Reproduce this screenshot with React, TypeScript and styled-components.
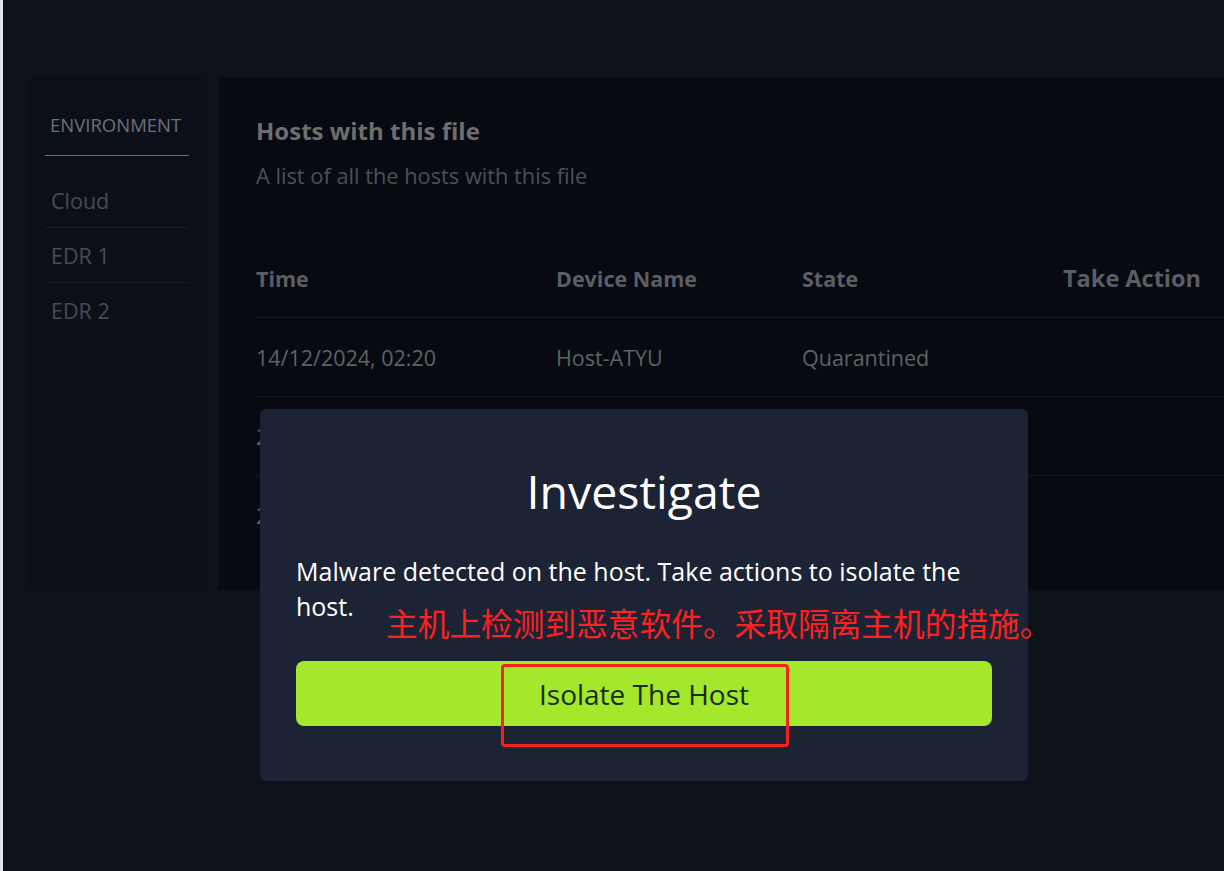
import styled, { createGlobalStyle } from "styled-components";

const GlobalStyle = createGlobalStyle`
  html, body, #root {
    margin: 0;
    height: 100%;
  }
  body {
    background-color: #0d1119;
    font-family: "Open Sans", "Noto Sans", sans-serif;
    overflow: hidden;
  }
  * {
    box-sizing: border-box;
  }
`;

const Page = styled.div`
  position: relative;
  height: 100%;
  border-left: 3px solid #dfe3ea;
  background-color: #0d1119;
  padding: 77px 0 0 24px;
  overflow: hidden;
`;

const Layout = styled.div`
  display: flex;
  gap: 12px;
  align-items: stretch;
  width: 1300px;
`;

const Sidebar = styled.aside`
  width: 180px;
  background-color: #0b0f17;
  padding: 36px 18px 0;
`;

const SideHeading = styled.div`
  font-size: 18.5px;
  line-height: 24px;
  color: #6d717a;
  padding: 0 0 18px 5px;
  border-bottom: 1px solid #6a7a30;
`;

const SideList = styled.ul`
  list-style: none;
  margin: 17px 0 0;
  padding: 0;
`;

const SideItem = styled.li<{ last?: boolean }>`
  height: 55px;
  display: flex;
  align-items: center;
  padding-left: 6px;
  font-size: 21.5px;
  color: #474c55;
  border-bottom: ${(p) => (p.last ? "none" : "1px solid #181c24")};
`;

const Main = styled.main`
  flex: 1;
  background-color: #070a11;
  padding: 39px 0 36px 37px;
`;

const Title = styled.h2`
  margin: 0;
  font-size: 24px;
  line-height: 30px;
  font-weight: 700;
  color: #6e6e6e;
`;

const Subtitle = styled.p`
  margin: 17px 0 0;
  font-size: 21.8px;
  line-height: 26px;
  color: #4b5058;
`;

const Table = styled.div`
  margin-top: 50px;
`;

const Row = styled.div<{ head?: boolean; last?: boolean }>`
  display: grid;
  grid-template-columns: 300px 246px 261px 200px 1fr;
  align-items: center;
  height: ${(p) => (p.last ? "78px" : "79px")};
  border-bottom: ${(p) => (p.last ? "none" : "1px solid #171b23")};
  font-size: 21.5px;
  font-weight: ${(p) => (p.head ? 700 : 400)};
  color: ${(p) => (p.head ? "#5b5e64" : "#5f6166")};
  white-space: nowrap;
`;

const ActionHead = styled.span`
  font-size: 23.5px;
`;

const Modal = styled.div`
  position: absolute;
  left: 257px;
  top: 409px;
  width: 768px;
  background-color: #1c2335;
  border-radius: 6px;
  padding: 56px 36px 55px;
  display: flex;
  flex-direction: column;
`;

const ModalTitle = styled.h1`
  margin: 0;
  text-align: center;
  font-size: 46.5px;
  line-height: 53px;
  font-weight: 400;
  color: #ffffff;
`;

const ModalText = styled.p`
  margin: 36px 0 0;
  font-size: 25px;
  line-height: 35px;
  color: #ffffff;
`;

const IsolateButton = styled.button`
  margin-top: 37px;
  height: 65px;
  width: 100%;
  border: none;
  border-radius: 8px;
  background-color: #a3e82a;
  color: #1b2a0c;
  font-family: "Open Sans", "Noto Sans", sans-serif;
  font-size: 28px;
  cursor: pointer;
`;

const Annotation = styled.span`
  position: absolute;
  left: 126px;
  top: 195px;
  font-family: "Noto Sans CJK SC", sans-serif;
  font-size: 31.7px;
  line-height: 37px;
  color: #ff2020;
  white-space: nowrap;
`;

const Highlight = styled.div`
  position: absolute;
  left: 241px;
  top: 255px;
  width: 288px;
  height: 83px;
  border: 3px solid #f5221b;
  border-radius: 4px;
  pointer-events: none;
`;

const sideItems = ["Cloud", "EDR 1", "EDR 2"];

const hosts = [
  { time: "14/12/2024, 02:20", device: "Host-ATYU", state: "Quarantined" },
  { time: "21/12/2024, 11:05", device: "Host-KQPL", state: "Infected" },
  { time: "28/12/2024, 17:42", device: "Host-ZMRE", state: "Infected" },
];

export default function App() {
  return (
    <>
      <GlobalStyle />
      <Page>
        <Layout>
          <Sidebar>
            <SideHeading>ENVIRONMENT</SideHeading>
            <SideList>
              {sideItems.map((item, i) => (
                <SideItem key={item} last={i === sideItems.length - 1}>
                  {item}
                </SideItem>
              ))}
            </SideList>
          </Sidebar>
          <Main>
            <Title>Hosts with this file</Title>
            <Subtitle>A list of all the hosts with this file</Subtitle>
            <Table>
              <Row head>
                <span>Time</span>
                <span>Device Name</span>
                <span>State</span>
                <ActionHead>Take Action</ActionHead>
                <span />
              </Row>
              {hosts.map((h, i) => (
                <Row key={h.time} last={i === hosts.length - 1}>
                  <span>{h.time}</span>
                  <span>{h.device}</span>
                  <span>{h.state}</span>
                  <span />
                  <span />
                </Row>
              ))}
            </Table>
          </Main>
        </Layout>
        <Modal>
          <ModalTitle>Investigate</ModalTitle>
          <ModalText>
            Malware detected on the host. Take actions to isolate the host.
          </ModalText>
          <IsolateButton>Isolate The Host</IsolateButton>
          <Annotation>主机上检测到恶意软件。采取隔离主机的措施。</Annotation>
          <Highlight />
        </Modal>
      </Page>
    </>
  );
}
